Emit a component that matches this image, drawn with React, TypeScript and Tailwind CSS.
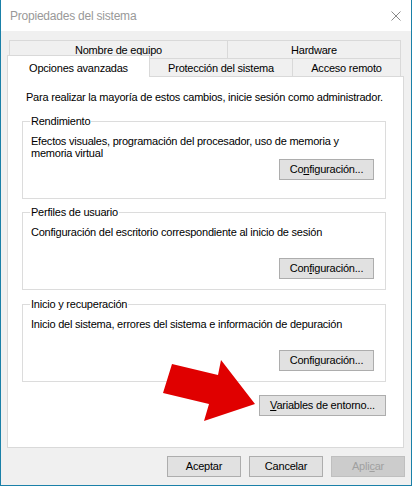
import React from "react";

const font = { fontFamily: '"Liberation Sans", Arial, sans-serif' };

const WinButton = ({
  children,
  className = "",
  disabled = false,
}: {
  children: React.ReactNode;
  className?: string;
  disabled?: boolean;
}) => (
  <button
    className={
      "h-[21px] border text-[11px] leading-none flex items-center justify-center " +
      (disabled
        ? "bg-[#cccccc] border-[#bfbfbf] text-[#a0a0a0] "
        : "bg-[#e1e1e1] border-[#adadad] text-black ") +
      className
    }
  >
    {children}
  </button>
);

const Group = ({
  title,
  children,
  button,
}: {
  title: string;
  children: React.ReactNode;
  button: React.ReactNode;
}) => (
  <fieldset className="w-[364px] h-[84px] border border-[#dcdcdc] pl-[8px] pr-[11px] pb-[10px] flex flex-col">
    <legend className="px-[1px] -ml-[1px] text-[11px] leading-[12px]">{title}</legend>
    <p className="mt-[8px] text-[11px] leading-[12px]">{children}</p>
    <div className="mt-auto flex justify-end">
      <WinButton className="w-[95px]">{button}</WinButton>
    </div>
  </fieldset>
);

export default function App() {
  return (
    <div
      className="relative w-[412px] h-[486px] bg-[#f0f0f0] border-x border-b border-[#1a80a8] flex flex-col text-black tracking-[-0.22px]"
      style={font}
    >
      {/* title bar */}
      <div className="h-[31px] bg-white flex items-center justify-between pl-[9px] pr-[10px] shrink-0">
        <span className="text-[12px] text-[#999999]">Propiedades del sistema</span>
        <svg width="10" height="10" viewBox="0 0 10 10" className="mt-[1px]">
          <path d="M0.5 0.5 L9.5 9.5 M9.5 0.5 L0.5 9.5" stroke="#8a8a8a" strokeWidth="1" fill="none" />
        </svg>
      </div>

      <div className="pt-[9px] pl-[6px] flex flex-col">
        {/* back row of tabs */}
        <div className="ml-[2px] flex h-[18px] text-[11px]">
          <div className="w-[218px] border-l border-t border-[#d9d9d9] flex items-center justify-center pt-[1px]">
            Nombre de equipo
          </div>
          <div className="w-[174px] border-x border-t border-[#d9d9d9] flex items-center justify-center pt-[1px]">
            Hardware
          </div>
        </div>
        {/* front row of tabs */}
        <div className="-mt-[3px] flex items-end h-[21px] text-[11px]">
          <div className="relative z-10 w-[143px] h-[22px] -mb-px bg-white border-x border-t border-[#d9d9d9] flex items-start justify-center pt-[4px]">
            Opciones avanzadas
          </div>
          <div className="w-[142px] h-[18px] border-t border-[#d9d9d9] flex items-center justify-center pt-[1px]">
            Protección del sistema
          </div>
          <div className="w-[109px] h-[18px] border-x border-t border-[#d9d9d9] flex items-center justify-center pt-[1px]">
            Acceso remoto
          </div>
        </div>

        {/* tab panel */}
        <div className="w-[397px] h-[372px] bg-white border border-[#d9d9d9] pt-[14px] flex flex-col">
          <p className="pl-[18px] text-[11px] leading-[12px]">
            Para realizar la mayoría de estos cambios, inicie sesión como administrador.
          </p>
          <div className="ml-[14px] mt-[12px] flex flex-col">
            <Group
              title="Rendimiento"
              button={
                <span>
                  Co<span className="underline">n</span>figuración...
                </span>
              }
            >
              Efectos visuales, programación del procesador, uso de memoria y
              <br />
              memoria virtual
            </Group>
            <div className="mt-[7px]">
              <Group
                title="Perfiles de usuario"
                button={
                  <span>
                    Con<span className="underline">f</span>iguración...
                  </span>
                }
              >
                Configuración del escritorio correspondiente al inicio de sesión
              </Group>
            </div>
            <div className="mt-[8px]">
              <Group
                title="Inicio y recuperación"
                button={
                  <span>
                    Confi<span className="underline">g</span>uración...
                  </span>
                }
              >
                Inicio del sistema, errores del sistema e información de depuración
              </Group>
            </div>
            <div className="w-[364px] mt-[13px] flex justify-end">
              <WinButton className="w-[127px]">
                <span>
                  <span className="underline">V</span>ariables de entorno...
                </span>
              </WinButton>
            </div>
          </div>
        </div>

        {/* dialog buttons */}
        <div className="mt-[8px] pr-[6px] flex justify-end gap-[8px]">
          <WinButton className="w-[74px]">Aceptar</WinButton>
          <WinButton className="w-[74px]">Cancelar</WinButton>
          <WinButton className="w-[74px]" disabled>
            <span>
              Apli<span className="underline">c</span>ar
            </span>
          </WinButton>
        </div>
      </div>

      {/* red annotation arrow */}
      <svg className="absolute left-0 top-0 pointer-events-none" width="412" height="486">
        <polygon
          points="171,364 217,375 220,360 254,404 203,421 208,404 162,393"
          fill="#e00000"
        />
      </svg>
    </div>
  );
}
